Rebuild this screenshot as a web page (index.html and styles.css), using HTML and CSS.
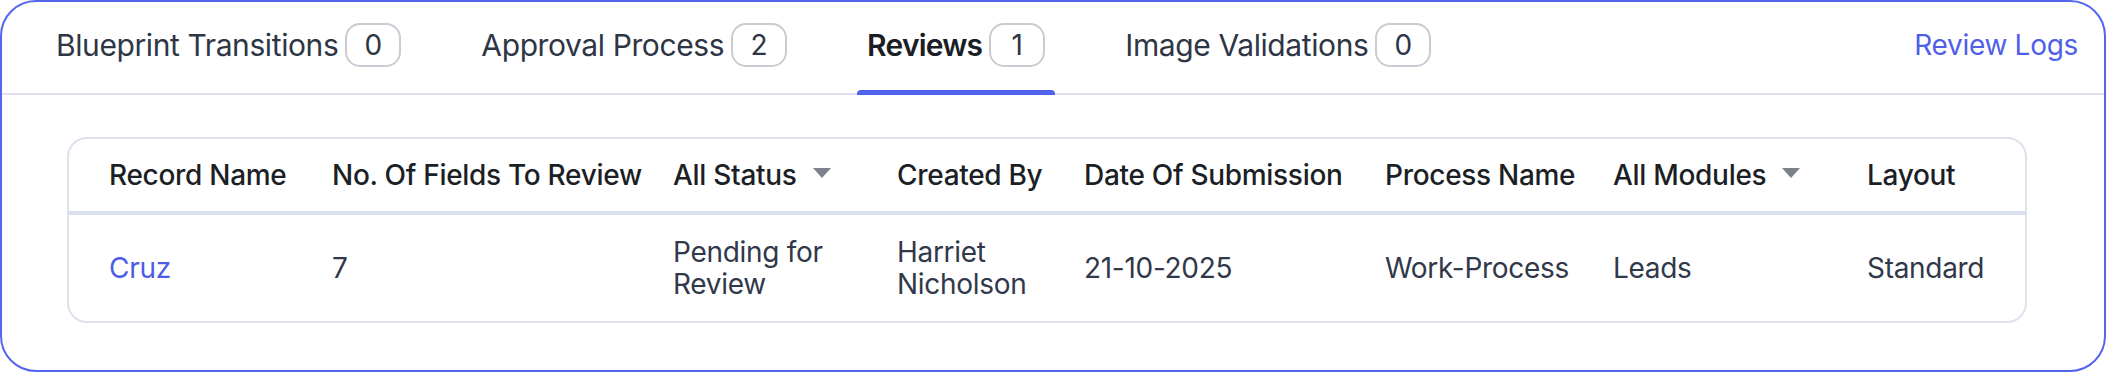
FILE: index.html
```html
<!DOCTYPE html>
<html lang="en">
<head>
    <meta charset="UTF-8">
    <meta name="viewport" content="width=device-width, initial-scale=1.0">
    <title>Reviews</title>
    <link rel="stylesheet" href="styles.css">
</head>
<body>
    <div class="panel">
        <div class="tabs">
            <div class="tab">Blueprint Transitions <span class="count">0</span></div>
            <div class="tab">Approval Process <span class="count">2</span></div>
            <div class="tab active">Reviews <span class="count">1</span></div>
            <div class="tab">Image Validations <span class="count">0</span></div>
            <a class="logs" href="#">Review Logs</a>
        </div>
        <div class="card">
            <div class="row head">
                <div class="cell">Record Name</div>
                <div class="cell">No. Of Fields To Review</div>
                <div class="cell">All Status <span class="caret"></span></div>
                <div class="cell">Created By</div>
                <div class="cell">Date Of Submission</div>
                <div class="cell">Process Name</div>
                <div class="cell">All Modules <span class="caret"></span></div>
                <div class="cell">Layout</div>
            </div>
            <div class="row body">
                <div class="cell"><a href="#" class="record">Cruz</a></div>
                <div class="cell">7</div>
                <div class="cell">Pending for<br>Review</div>
                <div class="cell">Harriet<br>Nicholson</div>
                <div class="cell">21-10-2025</div>
                <div class="cell">Work-Process</div>
                <div class="cell">Leads</div>
                <div class="cell">Standard</div>
            </div>
        </div>
    </div>
</body>
</html>
```

FILE: styles.css
```css
body {
    margin: 0;
    padding: 0;
    background-color: #fff;
    font-family: Inter, "Noto Sans", sans-serif;
    color: #313849;
}
.panel {
    box-sizing: border-box;
    width: 2106px;
    height: 372px;
    border: 2px solid #5465ee;
    border-radius: 36px;
    background-color: #fff;
}
.tabs {
    display: flex;
    align-items: center;
    box-sizing: border-box;
    height: 93px;
    padding: 0 26px 5px 44px;
    border-bottom: 2px solid #e0dff0;
    gap: 60px;
}
.tab {
    position: relative;
    display: flex;
    align-items: center;
    height: 100%;
    padding: 0 10px;
    font-size: 30px;
    color: #2e3545;
    letter-spacing: -0.4px;
}
.tab.active {
    font-weight: 600;
    color: #1b1e25;
    letter-spacing: -0.8px;
}
.tab.active::after {
    content: "";
    position: absolute;
    left: 0;
    right: 0;
    bottom: -7px;
    height: 5px;
    border-radius: 4px 4px 0 0;
    background-color: #5163ea;
}
.count {
    display: inline-flex;
    align-items: center;
    justify-content: center;
    box-sizing: border-box;
    width: 56px;
    height: 44px;
    margin-left: 7px;
    border: 2px solid #cbcbd4;
    border-radius: 15px;
    font-size: 28px;
    font-weight: 400;
    letter-spacing: 0;
    color: #2e3545;
}
.logs {
    margin-left: auto;
    font-size: 28px;
    color: #4f5fea;
    text-decoration: none;
    letter-spacing: -0.3px;
}
.card {
    margin: 42px 77px 0 65px;
    border: 2px solid #dde2ee;
    border-radius: 20px;
}
.row {
    display: grid;
    grid-template-columns: 223px 341px 224px 187px 301px 228px 254px 1fr;
    align-items: center;
    padding-left: 40px;
    font-size: 28px;
    letter-spacing: -0.3px;
}
.row.head {
    height: 72px;
    border-bottom: 4px solid #d9dfec;
    font-weight: 500;
    color: #1c1f26;
}
.row.body {
    height: 106px;
    line-height: 32px;
}
.cell {
    display: flex;
    align-items: center;
}
.caret {
    display: inline-block;
    width: 0;
    height: 0;
    margin-left: 16px;
    margin-top: -4px;
    border-left: 9px solid transparent;
    border-right: 9px solid transparent;
    border-top: 10px solid #7d818b;
}
.record {
    color: #4d5ce6;
    text-decoration: none;
}
```
